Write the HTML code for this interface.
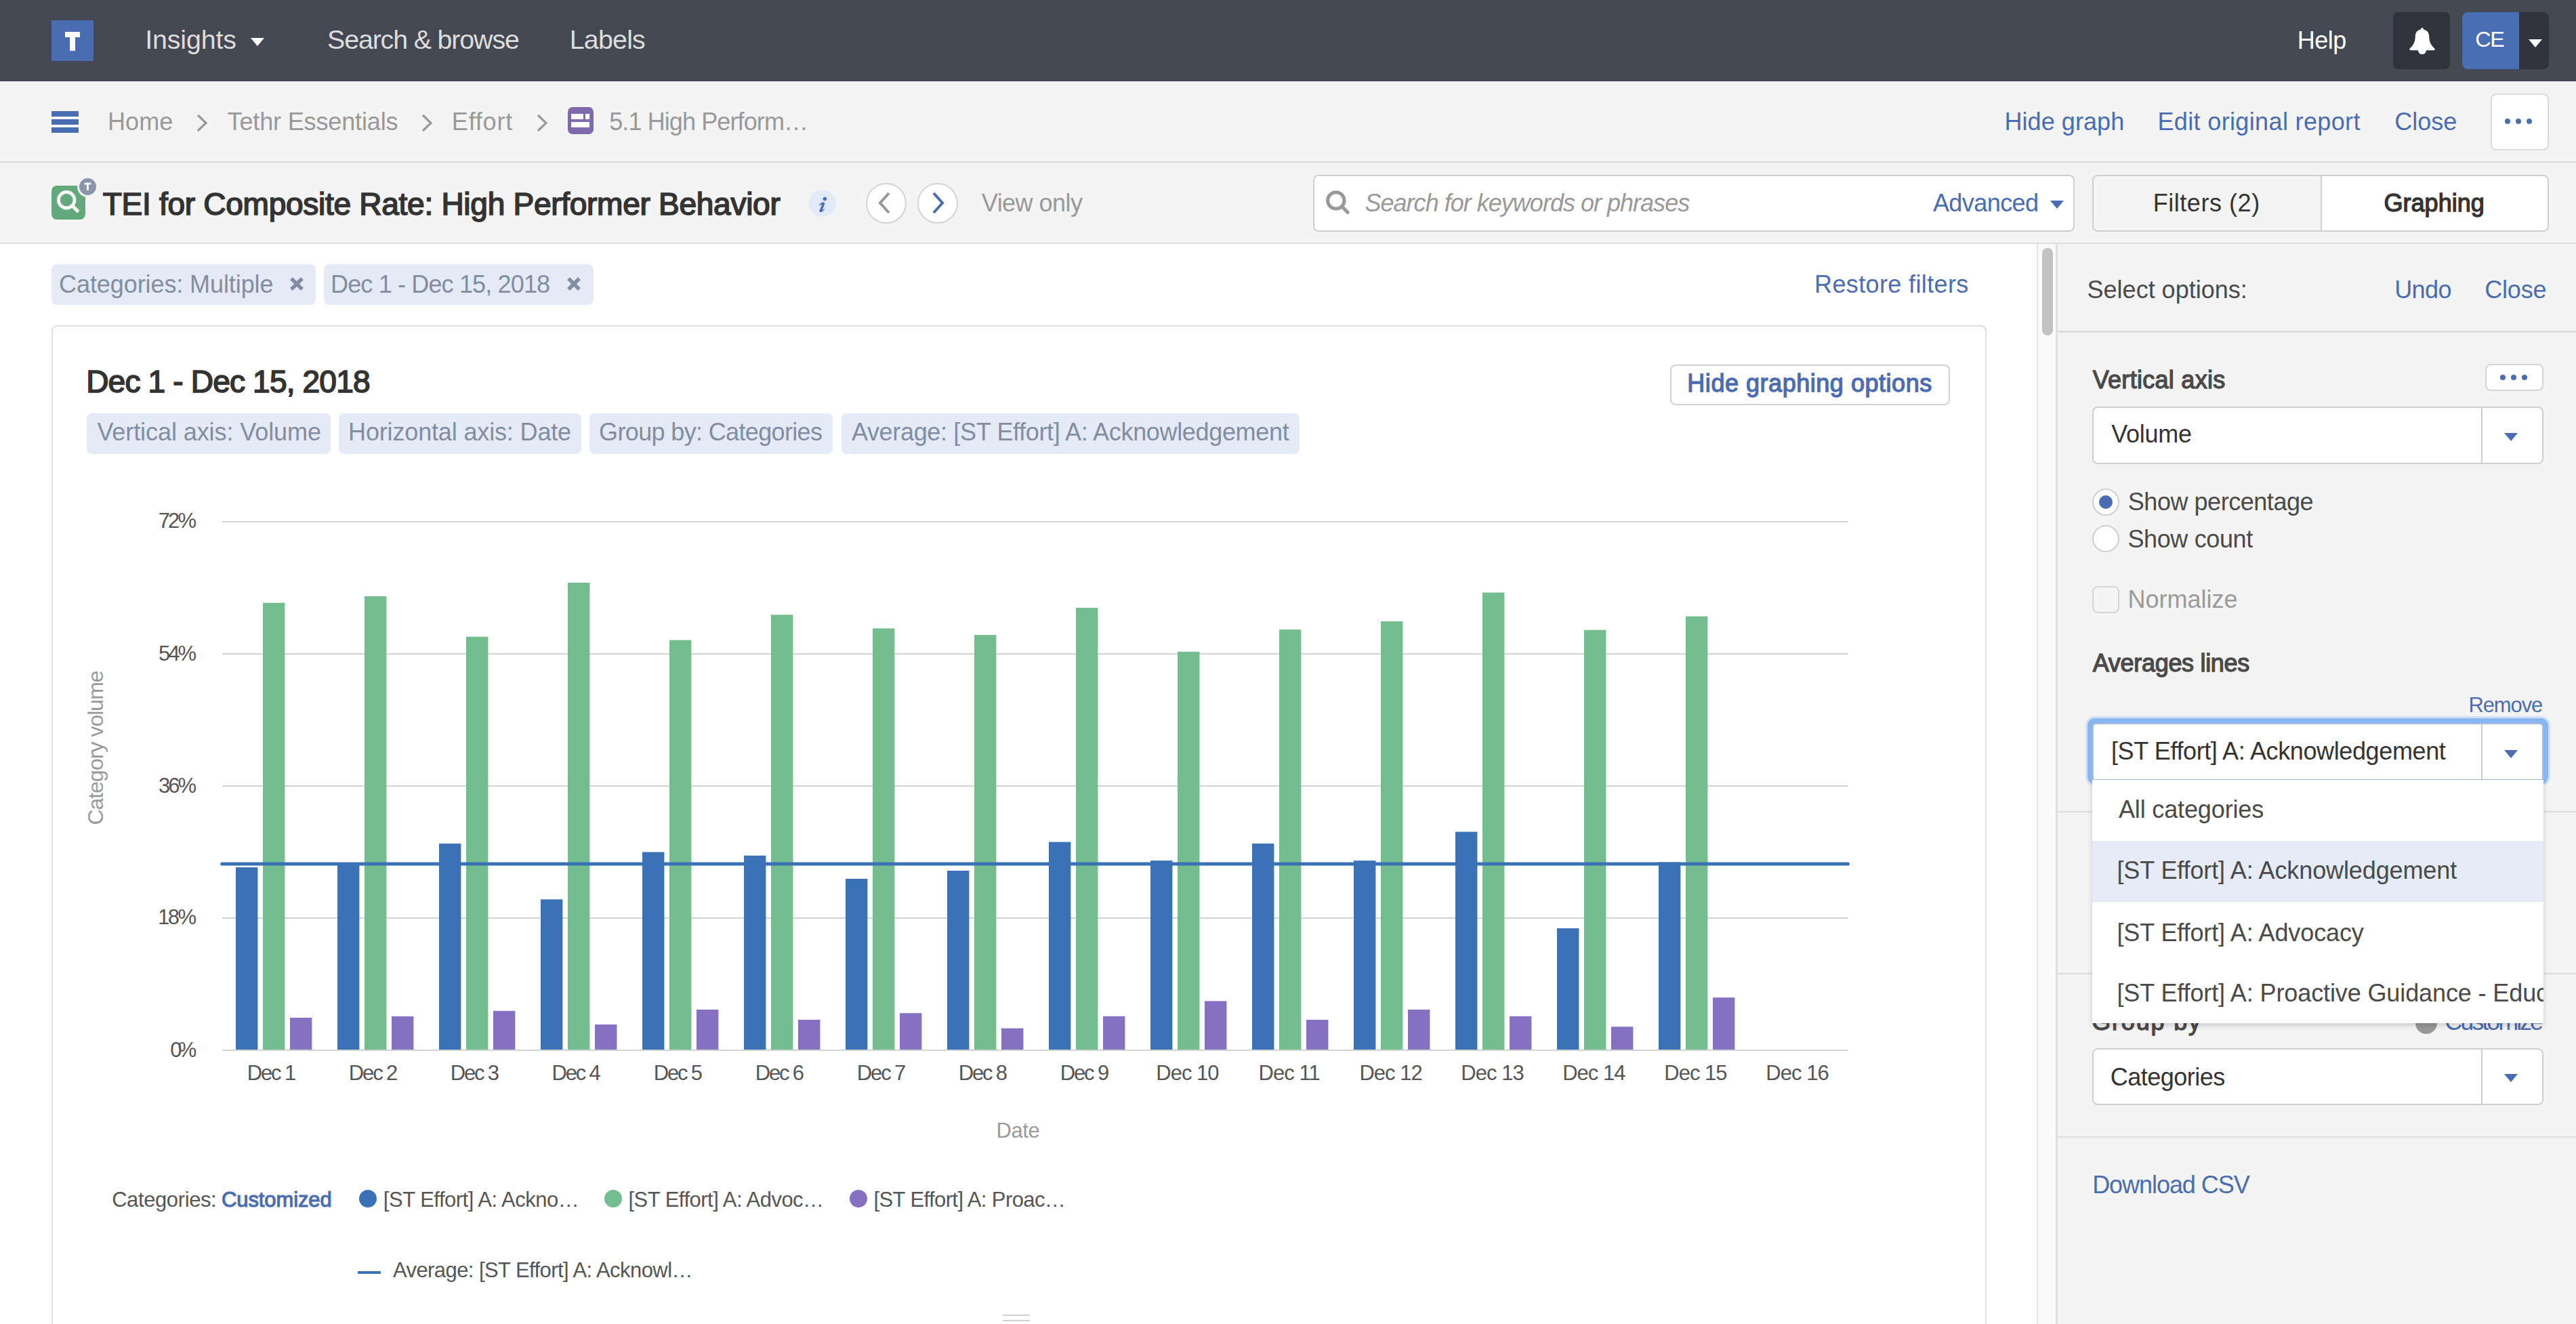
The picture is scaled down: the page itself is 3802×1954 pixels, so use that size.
<!DOCTYPE html>
<html><head><meta charset="utf-8"><style>
html,body{margin:0;padding:0;width:3802px;height:1954px;overflow:hidden;background:#fff;}
body{position:relative;font-family:"Liberation Sans",sans-serif;}
.a{position:absolute;}
.t{position:absolute;white-space:nowrap;line-height:1;}
</style></head><body>
<div class="a" style="left:0px;top:0px;width:3802px;height:120px;background:#444852;"></div>
<div class="a" style="left:76px;top:30px;width:62px;height:60px;background:#4a6cb3;"></div>
<div class="a" style="left:96px;top:47px;width:22px;height:8px;background:#fff;"></div>
<div class="a" style="left:103px;top:55px;width:8px;height:20px;background:#fff;"></div>
<div class="t " style="left:214.26px;top:39.45px;font-size:39.39px;letter-spacing:-0.139px;color:#dddddd;">Insights</div>
<svg class="a" style="left:370px;top:56px" width="20" height="12"><polygon points="0,0 20,0 10,12" fill="#fff"/></svg>
<div class="t " style="left:483.03px;top:39.45px;font-size:39.39px;letter-spacing:-1.144px;color:#dddddd;">Search &amp; browse</div>
<div class="t " style="left:840.75px;top:39.45px;font-size:39.39px;letter-spacing:-0.795px;color:#dddddd;">Labels</div>
<div class="t " style="left:3390.73px;top:42.38px;font-size:36.05px;letter-spacing:-0.520px;color:#fff;">Help</div>
<div class="a" style="left:3532px;top:18px;width:84px;height:84px;background:#30333c;border-radius:8px;"></div>
<svg class="a" style="left:3552px;top:38px" width="46" height="46" viewBox="0 0 46 46"><path d="M20.9 5.6 C20.7 3.9 21.6 2.9 22.9 2.9 C24.2 2.9 25.1 3.9 24.9 5.6 C30.5 6.8 33.1 10.5 33.2 15.5 C33.4 22.5 34.8 27.5 41.0 33.3 C42.5 34.8 41.6 36.2 39.8 36.2 L29 36.2 C28.8 39.8 26.3 42.1 23 42.1 C19.7 42.1 17.2 39.8 17 36.2 L6.2 36.2 C4.4 36.2 3.5 34.8 5.0 33.3 C11.2 27.5 12.6 22.5 12.8 15.5 C12.9 10.5 15.3 6.8 20.9 5.6 Z" fill="#fff"/></svg>
<div class="a" style="left:3634px;top:18px;width:128px;height:84px;background:#30333c;border-radius:8px;"></div>
<div class="a" style="left:3634px;top:18px;width:84px;height:84px;background:#4a6eb4;border-radius:8px 0 0 8px;"></div>
<div class="t " style="left:3653.19px;top:42.18px;font-size:32.27px;letter-spacing:-1.168px;color:#fff;">CE</div>
<svg class="a" style="left:3732px;top:58px" width="20" height="12"><polygon points="0,0 20,0 10,12" fill="#fff"/></svg>
<div class="a" style="left:0px;top:120px;width:3802px;height:118px;background:#f4f4f4;"></div>
<div class="a" style="left:0px;top:238px;width:3802px;height:2px;background:#dcdcdc;"></div>
<div class="a" style="left:76px;top:164px;width:40px;height:8px;background:#4a6cb3;"></div>
<div class="a" style="left:76px;top:176px;width:40px;height:8px;background:#4a6cb3;"></div>
<div class="a" style="left:76px;top:188px;width:40px;height:8px;background:#4a6cb3;"></div>
<div class="t " style="left:159.03px;top:161.98px;font-size:36.05px;letter-spacing:0.017px;color:#999;">Home</div>
<div class="t " style="left:335.59px;top:161.98px;font-size:36.05px;letter-spacing:-0.168px;color:#999;">Tethr Essentials</div>
<div class="t " style="left:666.83px;top:161.98px;font-size:36.05px;letter-spacing:0.784px;color:#999;">Effort</div>
<svg class="a" style="left:290px;top:168px" width="18" height="27"><polyline points="2,2 14,13.5 2,25" fill="none" stroke="#999" stroke-width="3.2"/></svg>
<svg class="a" style="left:622px;top:168px" width="18" height="27"><polyline points="2,2 14,13.5 2,25" fill="none" stroke="#999" stroke-width="3.2"/></svg>
<svg class="a" style="left:792px;top:168px" width="18" height="27"><polyline points="2,2 14,13.5 2,25" fill="none" stroke="#999" stroke-width="3.2"/></svg>
<div class="a" style="left:838px;top:158px;width:38px;height:40px;background:#7f6aad;border-radius:7px;"></div>
<div class="a" style="left:843px;top:168px;width:18px;height:8px;background:#fff;"></div>
<div class="a" style="left:864px;top:168px;width:6px;height:8px;background:#fff;"></div>
<div class="a" style="left:843px;top:180px;width:27px;height:8px;background:#fff;"></div>
<div class="t " style="left:899.16px;top:161.98px;font-size:36.05px;letter-spacing:-0.910px;color:#999;">5.1 High Perform…</div>
<div class="t " style="left:2958.43px;top:161.98px;font-size:36.05px;letter-spacing:0.051px;color:#4a6cb3;">Hide graph</div>
<div class="t " style="left:3184.43px;top:161.98px;font-size:36.05px;letter-spacing:0.343px;color:#4a6cb3;">Edit original report</div>
<div class="t " style="left:3534.20px;top:162.08px;font-size:36.05px;letter-spacing:0.008px;color:#4a6cb3;">Close</div>
<div class="a" style="left:3676px;top:138px;width:86px;height:84px;background:#fff;border:2px solid #dadada;border-radius:8px;box-sizing:border-box;"></div>
<div class="a" style="left:3696.5px;top:175px;width:8px;height:8px;border-radius:50%;background:#4a6cb3"></div>
<div class="a" style="left:3712.7px;top:175px;width:8px;height:8px;border-radius:50%;background:#4a6cb3"></div>
<div class="a" style="left:3728.6px;top:175px;width:8px;height:8px;border-radius:50%;background:#4a6cb3"></div>
<div class="a" style="left:0px;top:240px;width:3802px;height:118px;background:#f4f4f4;"></div>
<div class="a" style="left:0px;top:358px;width:3802px;height:2px;background:#dcdcdc;"></div>
<div class="a" style="left:76px;top:274px;width:50px;height:50px;background:#64a97b;border-radius:8px;"></div>
<svg class="a" style="left:76px;top:274px" width="50" height="50"><circle cx="22.2" cy="21.2" r="11.8" fill="none" stroke="#fff" stroke-width="4.8"/><line x1="30.6" y1="29.7" x2="38.3" y2="37.1" stroke="#fff" stroke-width="5" stroke-linecap="round"/></svg>
<div class="a" style="left:113.7px;top:259.5px;width:25px;height:25px;background:#8a94ab;border-radius:50%;border:3px solid #f4f4f4;"></div>
<svg class="a" style="left:116.7px;top:262.5px" width="25" height="25"><rect x="7.5" y="6.7" width="9.8" height="2.8" fill="#fff"/><rect x="11.1" y="6.7" width="2.7" height="11.2" fill="#fff"/></svg>
<div class="t " style="left:151.66px;top:277.59px;font-size:46.08px;letter-spacing:-0.304px;color:#333;-webkit-text-stroke:1.66px currentColor;">TEI for Composite Rate: High Performer Behavior</div>
<div class="a" style="left:1194px;top:280px;width:40px;height:40px;background:#e3eaf7;border-radius:50%;"></div>
<svg class="a" style="left:1194px;top:280px" width="40" height="40"><circle cx="23.4" cy="13.5" r="2.8" fill="#4a6cb3"/><path d="M15.1 22.0 C17 20.2 18.8 18.5 20.6 18.4 C22.6 18.3 23.6 19.6 23.0 21.4 L19.6 30.2 C20.5 30.0 21.5 29.0 22.8 27.9 L23.1 29.0 C21.3 31.2 19.4 33.0 17.2 33.1 C15.6 33.1 15.0 32.0 15.5 30.6 L19.3 21.6 C18.3 21.7 16.9 22.6 15.7 23.2 Z" fill="#4a6cb3"/></svg>
<div class="a" style="left:1278px;top:270px;width:60px;height:60px;background:#fff;border:2px solid #d4d4d4;border-radius:50%;box-sizing:border-box;"></div>
<div class="a" style="left:1354px;top:270px;width:60px;height:60px;background:#fff;border:2px solid #d4d4d4;border-radius:50%;box-sizing:border-box;"></div>
<svg class="a" style="left:1278px;top:270px" width="60" height="60"><polyline points="35,6 21,30.5 35,55" transform="translate(0,0) scale(1,1)" fill="none" stroke="#999" stroke-width="4.5" style="display:none"/><polyline points="34,15 21,29.5 34,44" fill="none" stroke="#979797" stroke-width="4"/></svg>
<svg class="a" style="left:1354px;top:270px" width="60" height="60"><polyline points="24,15 37,29.5 24,44" fill="none" stroke="#4a6cb3" stroke-width="4"/></svg>
<div class="t " style="left:1448.82px;top:282.08px;font-size:36.05px;letter-spacing:-0.548px;color:#999;">View only</div>
<div class="a" style="left:1938px;top:258px;width:1124px;height:84px;background:#fff;border:2px solid #cfcfcf;border-radius:8px;box-sizing:border-box;"></div>
<svg class="a" style="left:1955px;top:279px" width="40" height="40"><circle cx="16.8" cy="16.9" r="12.15" fill="none" stroke="#999" stroke-width="5.1"/><line x1="26" y1="26.2" x2="34.2" y2="34.5" stroke="#999" stroke-width="5.2" stroke-linecap="round"/></svg>
<div class="t " style="left:2014.51px;top:282.08px;font-size:36.05px;letter-spacing:-1.006px;color:#999;font-style:italic;">Search for keywords or phrases</div>
<div class="t " style="left:2852.91px;top:282.08px;font-size:36.05px;letter-spacing:-0.597px;color:#4a6cb3;">Advanced</div>
<svg class="a" style="left:3026px;top:296px" width="20" height="12"><polygon points="0,0 20,0 10,12" fill="#4a6cb3"/></svg>
<div class="a" style="left:3088px;top:258px;width:339px;height:84px;background:#f4f4f4;border:2px solid #cfcfcf;border-radius:8px 0 0 8px;box-sizing:border-box;"></div>
<div class="a" style="left:3425px;top:258px;width:337px;height:84px;background:#fff;border:2px solid #cfcfcf;border-radius:0 8px 8px 0;box-sizing:border-box;"></div>
<div class="t " style="left:3177.63px;top:282.08px;font-size:36.05px;letter-spacing:0.533px;color:#333;">Filters (2)</div>
<div class="t " style="left:3518.40px;top:282.08px;font-size:36.05px;letter-spacing:0.030px;color:#333;-webkit-text-stroke:1.30px currentColor;">Graphing</div>
<div class="a" style="left:0px;top:360px;width:3006px;height:1594px;background:#fff;"></div>
<div class="a" style="left:76px;top:390px;width:390px;height:60px;background:#e5ebf6;border-radius:8px;"></div>
<div class="a" style="left:478px;top:390px;width:398px;height:60px;background:#e5ebf6;border-radius:8px;"></div>
<div class="t " style="left:87.10px;top:401.88px;font-size:36.05px;letter-spacing:-0.112px;color:#838da2;">Categories: Multiple</div>
<div class="t " style="left:488.03px;top:401.88px;font-size:36.05px;letter-spacing:-0.870px;color:#838da2;">Dec 1 - Dec 15, 2018</div>
<svg class="a" style="left:428px;top:409px" width="20" height="20"><path d="M2 2 L18 18 M18 2 L2 18" stroke="#838da2" stroke-width="5.4"/></svg>
<svg class="a" style="left:837px;top:409px" width="20" height="20"><path d="M2 2 L18 18 M18 2 L2 18" stroke="#838da2" stroke-width="5.4"/></svg>
<div class="t " style="left:2678.03px;top:402.08px;font-size:36.05px;letter-spacing:0.351px;color:#4a6cb3;">Restore filters</div>
<div class="a" style="left:76px;top:480px;width:2856px;height:1620px;background:#fff;border:2px solid #dedede;border-radius:8px;box-sizing:border-box;"></div>
<div class="t " style="left:127.20px;top:539.69px;font-size:46.08px;letter-spacing:-0.845px;color:#333;-webkit-text-stroke:1.66px currentColor;">Dec 1 - Dec 15, 2018</div>
<div class="a" style="left:2465px;top:538px;width:413px;height:60px;background:#fff;border:2px solid #d2d2d2;border-radius:8px;box-sizing:border-box;"></div>
<div class="t " style="left:2490.33px;top:548.08px;font-size:36.05px;letter-spacing:0.510px;color:#4a6cb3;-webkit-text-stroke:1.30px currentColor;">Hide graphing options</div>
<div class="a" style="left:128px;top:610px;width:360px;height:60px;background:#e5ebf6;border-radius:8px;"></div>
<div class="t " style="left:143.42px;top:620.08px;font-size:36.05px;letter-spacing:-0.101px;color:#838da2;">Vertical axis: Volume</div>
<div class="a" style="left:500px;top:610px;width:357.5px;height:60px;background:#e5ebf6;border-radius:8px;"></div>
<div class="t " style="left:514.03px;top:620.08px;font-size:36.05px;letter-spacing:-0.171px;color:#838da2;">Horizontal axis: Date</div>
<div class="a" style="left:870px;top:610px;width:359.4px;height:60px;background:#e5ebf6;border-radius:8px;"></div>
<div class="t " style="left:884.10px;top:620.08px;font-size:36.05px;letter-spacing:-0.672px;color:#838da2;">Group by: Categories</div>
<div class="a" style="left:1242px;top:610px;width:676px;height:60px;background:#e5ebf6;border-radius:8px;"></div>
<div class="t " style="left:1256.91px;top:620.08px;font-size:36.05px;letter-spacing:-0.354px;color:#838da2;">Average: [ST Effort] A: Acknowledgement</div>
<svg class="a" style="left:0;top:0" width="3006" height="1954"><rect x="328" y="769" width="2400" height="2" fill="#d4d4d4"/><rect x="328" y="964" width="2400" height="2" fill="#d4d4d4"/><rect x="328" y="1159" width="2400" height="2" fill="#d4d4d4"/><rect x="328" y="1354" width="2400" height="2" fill="#d4d4d4"/><rect x="328" y="1549" width="2400" height="2" fill="#d4d4d4"/><rect x="348.0" y="1280.0" width="32.4" height="269.0" fill="#3b72b5"/><rect x="388.0" y="889.7" width="32.4" height="659.3" fill="#74bd8e"/><rect x="428.0" y="1502.0" width="32.4" height="47.0" fill="#8670c2"/><rect x="498.0" y="1277.0" width="32.4" height="272.0" fill="#3b72b5"/><rect x="538.0" y="879.9" width="32.4" height="669.1" fill="#74bd8e"/><rect x="578.0" y="1499.9" width="32.4" height="49.1" fill="#8670c2"/><rect x="648.0" y="1245.0" width="32.4" height="304.0" fill="#3b72b5"/><rect x="688.0" y="939.7" width="32.4" height="609.3" fill="#74bd8e"/><rect x="728.0" y="1491.9" width="32.4" height="57.1" fill="#8670c2"/><rect x="798.0" y="1327.3" width="32.4" height="221.7" fill="#3b72b5"/><rect x="838.0" y="860.0" width="32.4" height="689.0" fill="#74bd8e"/><rect x="878.0" y="1512.0" width="32.4" height="37.0" fill="#8670c2"/><rect x="948.0" y="1257.5" width="32.4" height="291.5" fill="#3b72b5"/><rect x="988.0" y="944.6" width="32.4" height="604.4" fill="#74bd8e"/><rect x="1028.0" y="1490.0" width="32.4" height="59.0" fill="#8670c2"/><rect x="1098.0" y="1262.7" width="32.4" height="286.3" fill="#3b72b5"/><rect x="1138.0" y="907.3" width="32.4" height="641.7" fill="#74bd8e"/><rect x="1178.0" y="1505.0" width="32.4" height="44.0" fill="#8670c2"/><rect x="1248.0" y="1297.0" width="32.4" height="252.0" fill="#3b72b5"/><rect x="1288.0" y="927.4" width="32.4" height="621.6" fill="#74bd8e"/><rect x="1328.0" y="1495.2" width="32.4" height="53.8" fill="#8670c2"/><rect x="1398.0" y="1285.0" width="32.4" height="264.0" fill="#3b72b5"/><rect x="1438.0" y="937.1" width="32.4" height="611.9" fill="#74bd8e"/><rect x="1478.0" y="1517.6" width="32.4" height="31.4" fill="#8670c2"/><rect x="1548.0" y="1242.6" width="32.4" height="306.4" fill="#3b72b5"/><rect x="1588.0" y="897.0" width="32.4" height="652.0" fill="#74bd8e"/><rect x="1628.0" y="1499.8" width="32.4" height="49.2" fill="#8670c2"/><rect x="1698.0" y="1270.1" width="32.4" height="278.9" fill="#3b72b5"/><rect x="1738.0" y="961.8" width="32.4" height="587.2" fill="#74bd8e"/><rect x="1778.0" y="1477.4" width="32.4" height="71.6" fill="#8670c2"/><rect x="1848.0" y="1244.9" width="32.4" height="304.1" fill="#3b72b5"/><rect x="1888.0" y="929.1" width="32.4" height="619.9" fill="#74bd8e"/><rect x="1928.0" y="1505.0" width="32.4" height="44.0" fill="#8670c2"/><rect x="1998.0" y="1270.1" width="32.4" height="278.9" fill="#3b72b5"/><rect x="2038.0" y="917.0" width="32.4" height="632.0" fill="#74bd8e"/><rect x="2078.0" y="1490.0" width="32.4" height="59.0" fill="#8670c2"/><rect x="2148.0" y="1227.6" width="32.4" height="321.4" fill="#3b72b5"/><rect x="2188.0" y="874.5" width="32.4" height="674.5" fill="#74bd8e"/><rect x="2228.0" y="1499.8" width="32.4" height="49.2" fill="#8670c2"/><rect x="2298.0" y="1370.0" width="32.4" height="179.0" fill="#3b72b5"/><rect x="2338.0" y="929.7" width="32.4" height="619.3" fill="#74bd8e"/><rect x="2378.0" y="1515.3" width="32.4" height="33.7" fill="#8670c2"/><rect x="2448.0" y="1272.4" width="32.4" height="276.6" fill="#3b72b5"/><rect x="2488.0" y="909.6" width="32.4" height="639.4" fill="#74bd8e"/><rect x="2528.0" y="1472.2" width="32.4" height="76.8" fill="#8670c2"/><rect x="328" y="1549" width="2400" height="2" fill="#d4d4d4"/><line x1="327.6" y1="1275.1" x2="2727.5" y2="1275.1" stroke="#3b72b5" stroke-width="5" stroke-linecap="round"/></svg>
<div class="t " style="left:233.65px;top:754.49px;font-size:30.96px;letter-spacing:-2.733px;color:#555;">72%</div>
<div class="t " style="left:233.96px;top:949.79px;font-size:30.96px;letter-spacing:-2.888px;color:#555;">54%</div>
<div class="t " style="left:234.04px;top:1144.69px;font-size:30.96px;letter-spacing:-2.926px;color:#555;">36%</div>
<div class="t " style="left:232.88px;top:1339.49px;font-size:30.96px;letter-spacing:-2.346px;color:#555;">18%</div>
<div class="t " style="left:251.26px;top:1534.69px;font-size:30.96px;letter-spacing:-5.815px;color:#555;">0%</div>
<div class="t " style="left:364.80px;top:1569.39px;font-size:30.96px;letter-spacing:-2.120px;color:#555;">Dec 1</div>
<div class="t " style="left:514.83px;top:1569.39px;font-size:30.96px;letter-spacing:-2.118px;color:#555;">Dec 2</div>
<div class="t " style="left:664.73px;top:1569.39px;font-size:30.96px;letter-spacing:-2.124px;color:#555;">Dec 3</div>
<div class="t " style="left:814.52px;top:1569.39px;font-size:30.96px;letter-spacing:-2.137px;color:#555;">Dec 4</div>
<div class="t " style="left:964.69px;top:1569.39px;font-size:30.96px;letter-spacing:-2.127px;color:#555;">Dec 5</div>
<div class="t " style="left:1114.73px;top:1569.39px;font-size:30.96px;letter-spacing:-2.124px;color:#555;">Dec 6</div>
<div class="t " style="left:1264.83px;top:1569.39px;font-size:30.96px;letter-spacing:-2.118px;color:#555;">Dec 7</div>
<div class="t " style="left:1414.73px;top:1569.39px;font-size:30.96px;letter-spacing:-2.124px;color:#555;">Dec 8</div>
<div class="t " style="left:1564.76px;top:1569.39px;font-size:30.96px;letter-spacing:-2.122px;color:#555;">Dec 9</div>
<div class="t " style="left:1706.27px;top:1569.39px;font-size:30.96px;letter-spacing:-0.961px;color:#555;">Dec 10</div>
<div class="t " style="left:1857.52px;top:1569.39px;font-size:30.96px;letter-spacing:-0.934px;color:#555;">Dec 11</div>
<div class="t " style="left:2006.46px;top:1569.39px;font-size:30.96px;letter-spacing:-0.957px;color:#555;">Dec 12</div>
<div class="t " style="left:2156.35px;top:1569.39px;font-size:30.96px;letter-spacing:-0.959px;color:#555;">Dec 13</div>
<div class="t " style="left:2306.13px;top:1569.39px;font-size:30.96px;letter-spacing:-0.964px;color:#555;">Dec 14</div>
<div class="t " style="left:2456.31px;top:1569.39px;font-size:30.96px;letter-spacing:-0.960px;color:#555;">Dec 15</div>
<div class="t " style="left:2606.35px;top:1569.39px;font-size:30.96px;letter-spacing:-0.959px;color:#555;">Dec 16</div>
<div class="t " style="left:1470.45px;top:1654.49px;font-size:30.96px;letter-spacing:-0.352px;color:#999;">Date</div>
<svg class="a" style="left:0;top:0" width="300" height="1954"><text transform="translate(151.5,1217.60) rotate(-90)" x="0" y="0" font-family="Liberation Sans" font-size="31.98" letter-spacing="-0.958" fill="#9a9a9a">Category volume</text></svg>
<div class="t " style="left:165.15px;top:1756.49px;font-size:30.96px;letter-spacing:-0.375px;color:#555;">Categories:</div>
<div class="t " style="left:327.05px;top:1756.49px;font-size:30.96px;letter-spacing:-0.087px;color:#4a6cb3;-webkit-text-stroke:1.11px currentColor;">Customized</div>
<div class="a" style="left:530.0px;top:1756px;width:26px;height:26px;border-radius:50%;background:#3b72b5"></div>
<div class="t " style="left:565.83px;top:1756.49px;font-size:30.96px;letter-spacing:-0.468px;color:#555;">[ST Effort] A: Ackno…</div>
<div class="a" style="left:892.2px;top:1756px;width:26px;height:26px;border-radius:50%;background:#74bd8e"></div>
<div class="t " style="left:927.43px;top:1756.49px;font-size:30.96px;letter-spacing:-0.478px;color:#555;">[ST Effort] A: Advoc…</div>
<div class="a" style="left:1254.2px;top:1756px;width:26px;height:26px;border-radius:50%;background:#8670c2"></div>
<div class="t " style="left:1289.53px;top:1756.49px;font-size:30.96px;letter-spacing:-0.573px;color:#555;">[ST Effort] A: Proac…</div>
<div class="a" style="left:528px;top:1876px;width:34px;height:4px;background:#3b72b5;"></div>
<div class="t " style="left:579.92px;top:1860.49px;font-size:30.96px;letter-spacing:-0.544px;color:#555;">Average: [ST Effort] A: Acknowl…</div>
<div class="a" style="left:1480px;top:1940px;width:40px;height:2px;background:#d0d0d0;"></div>
<div class="a" style="left:1480px;top:1948px;width:40px;height:2px;background:#d0d0d0;"></div>
<div class="a" style="left:3006px;top:360px;width:30px;height:1594px;background:#fafafa;border-left:2px solid #e6e6e6;box-sizing:border-box;"></div>
<div class="a" style="left:3014px;top:366px;width:16px;height:129px;background:#c2c2c2;border-radius:8px;"></div>
<div class="a" style="left:3034px;top:360px;width:768px;height:1594px;background:#f4f4f4;border-left:3px solid #e0e0e0;box-sizing:border-box;"></div>
<div class="a" style="left:3037px;top:488px;width:765px;height:2.5px;background:#dcdcdc;"></div>
<div class="t " style="left:3080.58px;top:409.98px;font-size:36.05px;letter-spacing:-0.022px;color:#4a4a4a;">Select options:</div>
<div class="t " style="left:3534.21px;top:409.98px;font-size:36.05px;letter-spacing:-0.639px;color:#4a6cb3;">Undo</div>
<div class="t " style="left:3667.20px;top:409.98px;font-size:36.05px;letter-spacing:-0.192px;color:#4a6cb3;">Close</div>
<div class="t " style="left:3088.72px;top:543.08px;font-size:36.05px;letter-spacing:0.269px;color:#4a4a4a;-webkit-text-stroke:1.30px currentColor;">Vertical axis</div>
<div class="a" style="left:3668px;top:537px;width:86px;height:40px;background:#fff;border:2px solid #d4d4d4;border-radius:8px;box-sizing:border-box;"></div>
<div class="a" style="left:3689.5px;top:553px;width:8px;height:8px;border-radius:50%;background:#4a6cb3"></div>
<div class="a" style="left:3705.8px;top:553px;width:8px;height:8px;border-radius:50%;background:#4a6cb3"></div>
<div class="a" style="left:3722.0px;top:553px;width:8px;height:8px;border-radius:50%;background:#4a6cb3"></div>
<div class="a" style="left:3088px;top:600px;width:666px;height:85px;background:#fff;border:2px solid #cfcfcf;border-radius:8px;box-sizing:border-box;"></div>
<div class="a" style="left:3662px;top:602px;width:2px;height:81px;background:#cfcfcf;"></div>
<svg class="a" style="left:3696px;top:638.5px" width="20" height="12"><polygon points="0,0 20,0 10,12" fill="#4a6cb3"/></svg>
<div class="t " style="left:3116.22px;top:623.08px;font-size:36.05px;letter-spacing:-0.281px;color:#333;">Volume</div>
<div class="a" style="left:3088px;top:721px;width:40px;height:40px;border-radius:50%;background:#fff;border:2px solid #cfcfcf;box-sizing:border-box;"></div>
<div class="a" style="left:3098px;top:731px;width:20px;height:20px;border-radius:50%;background:#4a6cb3;"></div>
<div class="t " style="left:3140.78px;top:723.18px;font-size:36.05px;letter-spacing:-0.484px;color:#4a4a4a;">Show percentage</div>
<div class="a" style="left:3088px;top:775px;width:40px;height:40px;border-radius:50%;background:#fff;border:2px solid #cfcfcf;box-sizing:border-box;"></div>
<div class="t " style="left:3140.38px;top:777.58px;font-size:36.05px;letter-spacing:-0.384px;color:#4a4a4a;">Show count</div>
<div class="a" style="left:3088px;top:865px;width:40px;height:40px;border-radius:8px;background:#f4f4f4;border:2px solid #d6d6d6;box-sizing:border-box;"></div>
<div class="t " style="left:3140.53px;top:867.28px;font-size:36.05px;letter-spacing:-0.026px;color:#9a9a9a;">Normalize</div>
<div class="t " style="left:3088.81px;top:961.18px;font-size:36.05px;letter-spacing:-0.330px;color:#4a4a4a;-webkit-text-stroke:1.30px currentColor;">Averages lines</div>
<div class="t " style="left:3643.45px;top:1025.59px;font-size:30.96px;letter-spacing:-1.076px;color:#4a6cb3;">Remove</div>
<div class="a" style="left:3037px;top:1197px;width:765px;height:2px;background:#dcdcdc;"></div>
<div class="a" style="left:3037px;top:1436px;width:765px;height:2px;background:#dcdcdc;"></div>
<div class="a" style="left:3037px;top:1677px;width:765px;height:2px;background:#dcdcdc;"></div>
<div class="t " style="left:3087.20px;top:1489.78px;font-size:36.05px;letter-spacing:1.807px;color:#4a4a4a;-webkit-text-stroke:1.30px currentColor;">Group by</div>
<div class="a" style="left:3565px;top:1494px;width:32px;height:32px;border-radius:50%;background:#999;"></div>
<div class="t " style="left:3608.20px;top:1489.78px;font-size:36.05px;letter-spacing:-3.037px;color:#4a6cb3;">Customize</div>
<div class="a" style="left:3088px;top:1547px;width:666px;height:84px;background:#fff;border:2px solid #cfcfcf;border-radius:8px;box-sizing:border-box;"></div>
<div class="a" style="left:3662px;top:1549px;width:2px;height:80px;background:#cfcfcf;"></div>
<svg class="a" style="left:3696px;top:1585.0px" width="20" height="12"><polygon points="0,0 20,0 10,12" fill="#4a6cb3"/></svg>
<div class="t " style="left:3114.80px;top:1571.78px;font-size:36.05px;letter-spacing:-0.536px;color:#333;">Categories</div>
<div class="t " style="left:3088.13px;top:1731.08px;font-size:36.05px;letter-spacing:-1.076px;color:#4a6cb3;">Download CSV</div>
<div class="a" style="left:3078px;top:1057px;width:686px;height:103px;background:#cfe0f8;border-radius:14px;"></div>
<div class="a" style="left:3081px;top:1060px;width:680px;height:97px;background:#88b6f2;border-radius:11px;"></div>
<div class="a" style="left:3088px;top:1067px;width:666px;height:85px;background:#fff;border:2px solid #a9bcd8;border-radius:6px 6px 0 0;box-sizing:border-box;"></div>
<div class="a" style="left:3662px;top:1069px;width:2px;height:81px;background:#cfcfcf;"></div>
<svg class="a" style="left:3696px;top:1107px" width="20" height="12"><polygon points="0,0 20,0 10,12" fill="#4a6cb3"/></svg>
<div class="t " style="left:3115.98px;top:1090.98px;font-size:36.05px;letter-spacing:-0.405px;color:#333;">[ST Effort] A: Acknowledgement</div>
<div class="a" style="left:3088px;top:1151px;width:666px;height:359px;background:#fff;box-shadow:0 3px 8px rgba(0,0,0,0.18);overflow:hidden">
<div class="a" style="left:0;top:90px;width:666px;height:90px;background:#e5ebf7"></div>
<div class="t " style="left:38.91px;top:25.88px;font-size:36.05px;letter-spacing:-0.155px;color:#4a4a4a;">All categories</div>
<div class="t " style="left:36.48px;top:116.28px;font-size:36.05px;letter-spacing:-0.133px;color:#4a4a4a;">[ST Effort] A: Acknowledgement</div>
<div class="t " style="left:36.48px;top:208.08px;font-size:36.05px;letter-spacing:-0.133px;color:#4a4a4a;">[ST Effort] A: Advocacy</div>
<div class="t " style="left:36.48px;top:296.88px;font-size:36.05px;letter-spacing:-0.133px;color:#4a4a4a;">[ST Effort] A: Proactive Guidance - Education</div>
</div>
</body></html>
